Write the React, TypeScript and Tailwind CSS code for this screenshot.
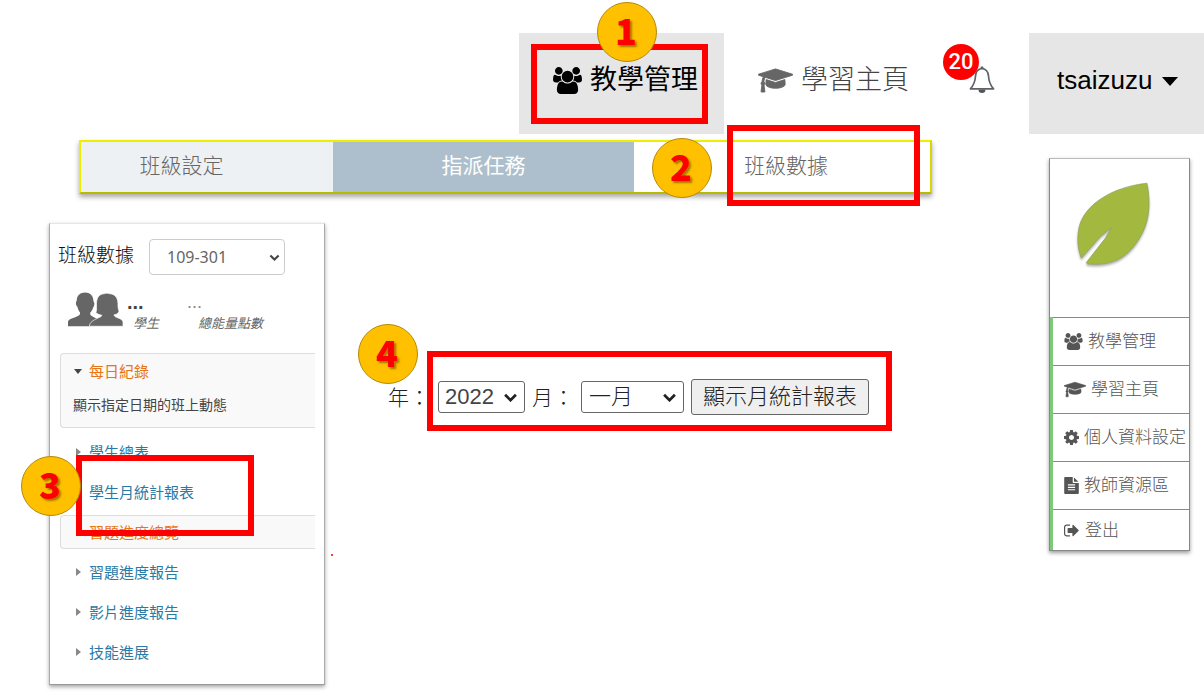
import type { ReactNode } from 'react';

type IconProps = { className?: string };

function UsersIcon({ className }: IconProps) {
  return (
    <svg viewBox="0 0 1920 1792" fill="currentColor" aria-hidden="true" className={className}>
      <path d="M593 896q-162 5-265 128h-134q-82 0-138-40.5t-56-118.5q0-353 124-353 6 0 43.5 21t97.5 42.5 119 21.5q67 0 133-23-5 37-5 66 0 139 81 256zm1071 637q0 120-73 189.5t-194 69.5h-874q-121 0-194-69.5t-73-189.5q0-53 3.5-103.5t14-109 26.5-108.5 43-97.5 62-81 85.5-53.5 111.5-20q10 0 43 21.5t73 48 107 48 135 21.5 135-21.5 107-48 73-48 43-21.5q61 0 111.5 20t85.5 53.5 62 81 43 97.5 26.5 108.5 14 109 3.5 103.5zm-1024-1277q0 106-75 181t-181 75-181-75-75-181 75-181 181-75 181 75 75 181zm704 384q0 159-112.5 271.5t-271.5 112.5-271.5-112.5-112.5-271.5 112.5-271.5 271.5-112.5 271.5 112.5 112.5 271.5zm576 225q0 78-56 118.5t-138 40.5h-134q-103-123-265-128 81-117 81-256 0-29-5-66 66 23 133 23 59 0 119-21.5t97.5-42.5 43.5-21q124 0 124 353zm-128-609q0 106-75 181t-181 75-181-75-75-181 75-181 181-75 181 75 75 181z" />
    </svg>
  );
}

function CapIcon({ className }: IconProps) {
  return (
    <svg viewBox="0 0 2304 1792" fill="currentColor" stroke="currentColor" strokeWidth="60" aria-hidden="true" className={className}>
      <path d="M1774 836l18 316q4 69-82 128t-235 93.5-323 34.5-323-34.5-235-93.5-82-128l18-316 574 181q22 7 48 7t48-7zm530-324q0 23-22 31l-1120 352q-4 1-10 1t-10-1l-652-206q-43 34-71 111.5t-34 178.5q63 36 63 109 0 69-58 107l58 433q2 14-8 25-9 11-24 11h-192q-15 0-24-11-10-11-8-25l58-433q-58-38-58-107 0-73 65-111 11-207 98-330l-333-104q-22-8-22-31t22-31l1120-352q4-1 10-1t10 1l1120 352q22 8 22 31z" />
    </svg>
  );
}

function CogIcon({ className }: IconProps) {
  return (
    <svg viewBox="128 128 1536 1536" fill="currentColor" aria-hidden="true" className={className}>
      <path d="M1152 896q0-106-75-181t-181-75-181 75-75 181 75 181 181 75 181-75 75-181zm512-109v222q0 12-8 23t-20 13l-185 28q-19 54-39 91 35 50 107 138 10 12 10 25t-9 23q-27 37-99 108t-94 71q-12 0-26-9l-138-108q-44 23-91 38-16 136-29 186-7 28-36 28h-222q-14 0-24.5-8.5t-11.5-21.5l-28-184q-49-16-90-37l-141 107q-10 9-25 9-14 0-25-11-126-114-165-168-7-10-7-23 0-12 8-23 15-21 51-66.5t54-70.5q-27-50-41-99l-183-27q-13-2-21-12.5t-8-23.5v-222q0-12 8-23t19-13l186-28q14-46 39-92-40-57-107-138-10-12-10-24 0-10 9-23 26-36 98.5-107.5t94.5-71.5q13 0 26 10l138 107q44-23 91-38 16-136 29-186 7-28 36-28h222q14 0 24.5 8.5t11.5 21.5l28 184q49 16 90 37l142-107q9-9 24-9 13 0 25 10 129 119 165 170 7 8 7 22 0 12-8 23-15 21-51 66.5t-54 70.5q26 50 41 98l183 28q13 2 21 12.5t8 23.5z" />
    </svg>
  );
}

function FileIcon({ className }: IconProps) {
  return (
    <svg viewBox="128 0 1536 1792" fill="currentColor" aria-hidden="true" className={className}>
      <path d="M1596 476q14 14 28 36h-472v-472q22 14 36 28zm-476 164h544v1056q0 40-28 68t-68 28h-1344q-40 0-68-28t-28-68v-1600q0-40 28-68t68-28h800v544q0 40 28 68t68 28zm160 736v-64q0-14-9-23t-23-9h-704q-14 0-23 9t-9 23v64q0 14 9 23t23 9h704q14 0 23-9t9-23zm0-256v-64q0-14-9-23t-23-9h-704q-14 0-23 9t-9 23v64q0 14 9 23t23 9h704q14 0 23-9t9-23zm0-256v-64q0-14-9-23t-23-9h-704q-14 0-23 9t-9 23v64q0 14 9 23t23 9h704q14 0 23-9t9-23z" />
    </svg>
  );
}

function SignOutIcon({ className }: IconProps) {
  return (
    <svg viewBox="64 224 1600 1344" fill="currentColor" aria-hidden="true" className={className}>
      <path d="M704 1440q0 4 1 20t.5 26.5-3 23.5-10 19.5-20.5 6.5h-320q-119 0-203.5-84.5t-84.5-203.5v-704q0-119 84.5-203.5t203.5-84.5h320q13 0 22.5 9.5t9.5 22.5q0 4 1 20t.5 26.5-3 23.5-10 19.5-20.5 6.5h-320q-66 0-113 47t-47 113v704q0 66 47 113t113 47h312l11.5 1 11.5 3 8 5.5 7 9 2 13.5zm928-544q0 26-19 45l-544 544q-19 19-45 19t-45-19-19-45v-288h-448q-26 0-45-19t-19-45v-384q0-26 19-45t45-19h448v-288q0-26 19-45t45-19 45 19l544 544q19 19 19 45z" />
    </svg>
  );
}

function BellIcon({ className }: IconProps) {
  return (
    <svg viewBox="0 0 26 27" aria-hidden="true" className={className}>
      <path d="M9.5 23.5h7a3.5 3.5 0 0 1-7 0z" fill="#555" />
      <path
        d="M13 2.5C8.500 3 6.800 6 6.500 10C6.200 15 5 19 1.400 22.800H24.600C21 19 19.800 15 19.500 10C19.200 6 17.500 3 13 2.500Z"
        fill="#fff"
        stroke="#5f6368"
        strokeWidth="1.700"
        strokeLinejoin="round"
      />
      <circle cx="13" cy="1.800" r="1.500" fill="#5f6368" />
    </svg>
  );
}

function PeopleIcon({ className }: IconProps) {
  return (
    <svg viewBox="0 0 164 102" fill="#666" aria-hidden="true" className={className}>
      <path d="M51 0C65 0 76 9 76 27c4 2 3 14-1 18c-2 8-6 13-9 16c0 7 2 9 10 12c6 3 10 5 13 8c-12 5-20 10-23 20H0V87c2-8 14-9 26-15c8-3 10-5 10-12c-4-4-6-9-8-17c-5-4-6-14-2-18C26 9 36 0 51 0Z" />
      <path
        d="M108 4c6-3 13-1 16 0c20 1 26 17 25 36c0 9 3 14 3 18c-4 6-9 8-15 9c1 5 6 7 12 9c11 4 15 8 15 14v11H64C64 89 76 83 88 77c7-3 12-5 13-9c-7-1-13-3-18-8c3-6 2-10 2-21C84 18 91 5 108 4Z"
        stroke="#fff"
        strokeWidth="2"
      />
    </svg>
  );
}

function Leaf({ className }: IconProps) {
  return (
    <svg viewBox="138 92 226 258" aria-hidden="true" className={className}>
      <path
        d="M352 98C365 165 358 220 326 269C288 328 240 348 172 341L169 337L226 264L245 232L212 258L154 324C142 292 141 263 147 232C163 160 250 109 352 98Z"
        fill="#a2b83f"
        stroke="#8fa05a"
        strokeWidth="2"
      />
    </svg>
  );
}

function Chevron({ className }: IconProps) {
  return (
    <svg viewBox="0 0 16 10" fill="none" stroke="currentColor" strokeWidth="3" aria-hidden="true" className={className}>
      <path d="M2 2l6 6 6-6" />
    </svg>
  );
}

function Step({ n, className }: { n: number; className: string }) {
  return (
    <span
      className={`absolute z-20 flex size-[60px] items-center justify-center rounded-full border border-[#b58a06] bg-[#ffc000] pb-[6px] pr-[2px] font-['Noto_Sans_CJK_TC',sans-serif] text-[36px] font-black leading-none text-[#ff0000] [text-shadow:2px_2px_2px_rgba(90,60,0,0.55)] ${className}`}
    >
      {n}
    </span>
  );
}

function Highlight({ className }: { className: string }) {
  return <span className={`pointer-events-none absolute z-10 border-6 border-[#ff0000] ${className}`} />;
}

function SideItem({ children, className = '', arrow = true }: { children: ReactNode; className?: string; arrow?: boolean }) {
  return (
    <li>
      <a href="#" className={`flex h-10 items-center pl-4 text-[15px] font-normal text-[#2a7aa5] ${className}`}>
        <svg viewBox="0 0 5 8" aria-hidden="true" className="mr-2 h-2 w-[5px]">
          {arrow && <path d="M0 0l5 4-5 4z" fill="#888" />}
        </svg>
        {children}
      </a>
    </li>
  );
}

const menu = [
  { label: '教學管理', icon: <UsersIcon className="mr-[5px] h-[17px] w-[19px]" /> },
  { label: '學習主頁', icon: <CapIcon className="mr-[5px] h-[17px] w-[22px]" /> },
  { label: '個人資料設定', icon: <CogIcon className="mr-[5px] size-[15px]" /> },
  { label: '教師資源區', icon: <FileIcon className="mr-[5px] h-[17px] w-[15px]" /> },
  { label: '登出', icon: <SignOutIcon className="mr-[6px] h-[13px] w-[15px]" /> },
];

export default function App() {
  return (
    <div className="min-h-screen overflow-hidden bg-white pt-[33px] font-['Liberation_Sans','Noto_Sans_CJK_TC',sans-serif] font-light leading-none text-[#555]">
      <header className="flex h-[101px] justify-end">
        <div className="relative w-[205px] bg-[#e6e6e6]">
          <a href="#" className="flex h-[95px] items-center pl-[34px] text-[27px] font-normal text-black">
            <UsersIcon className="mr-2 h-[27px] w-[29px]" />
            教學管理
          </a>
          <Highlight className="left-3 top-[11px] h-20 w-[177px]" />
          <Step n={1} className="-top-[31px] left-[78px]" />
        </div>
        <a href="#" className="ml-[34px] flex h-[95px] items-center text-[27px] text-[#444]">
          <CapIcon className="mr-2 h-[27px] w-[35px] text-[#666]" />
          學習主頁
        </a>
        <button type="button" aria-label="20" className="relative ml-[34px] flex h-[93px] w-[86px] items-center pl-[26px]">
          <BellIcon className="h-[27px] w-[26px]" />
          <span className="absolute left-0 top-[11px] flex size-9 items-center justify-center rounded-full bg-[#ff0000] font-['Roboto',sans-serif] text-[22px] font-medium text-white">
            20
          </span>
        </button>
        <button type="button" className="flex w-[175px] items-center bg-[#e6e6e6] pb-2 pl-7 text-[26px] font-normal text-black">
          tsaizuzu
          <svg viewBox="0 0 16 9" aria-hidden="true" className="ml-[10px] mt-1 h-[9px] w-4">
            <path d="M0 0h16L8 9z" />
          </svg>
        </button>
      </header>

      <div className="flex items-start">
        <main className="min-w-0 flex-1">
          <nav className="ml-[79px] mr-[117px] mt-[6px] flex h-[54px] border-2 border-[#eeee00] border-b-[#b9b900] border-r-[#d6d600] text-[21px] text-[#666] shadow-[0_3px_5px_rgba(0,0,0,0.35)]">
            <a href="#" className="flex w-[252px] shrink items-center justify-center bg-[#edf1f4] pb-1 pr-[51px]">班級設定</a>
            <a href="#" className="flex w-[301px] shrink items-center justify-center bg-[#adbfcc] pb-1 font-normal text-white">指派任務</a>
            <div className="relative flex flex-1">
              <a href="#" className="flex flex-1 items-center justify-center pb-1 pl-2">班級數據</a>
              <Highlight className="-top-[17px] left-[93px] h-[81px] w-[193px]" />
              <Step n={2} className="-top-1 left-[18px]" />
            </div>
          </nav>

          <div className="mt-[29px] flex items-start pb-3">
            <aside className="relative ml-[49px] h-[462px] w-[276px] border border-x-[#aaa] border-b-[#999] border-t-[#e5e5e5] pt-[15px] shadow-[0_2px_4px_rgba(0,0,0,0.35)]">
              <div className="flex h-9 items-center pl-2">
                <label htmlFor="class" className="w-[91px] pb-1 text-[19px] text-[#111]">班級數據</label>
                <div className="relative">
                  <select
                    id="class"
                    className="h-9 w-[136px] appearance-none rounded border border-[#ccc] bg-white pl-[17px] font-['Noto_Sans',sans-serif] text-base font-normal text-[#666]"
                  >
                    <option>109-301</option>
                  </select>
                  <Chevron className="pointer-events-none absolute right-[5px] top-[15px] h-[7px] w-[11px] text-[#444]" />
                </div>
              </div>
              <div className="mt-[17px] flex h-10 pl-[18px]">
                <PeopleIcon className="h-[35px] w-[55px]" />
                <div className="ml-1 w-[60px]">
                  <div className="h-[25px] text-[20px] font-bold leading-5 text-[#444]">...</div>
                  <div className="pl-[6px] text-[13px] font-normal italic text-[#666]">學生</div>
                </div>
                <div>
                  <div className="h-[25px] text-[18px] leading-5 text-[#888]">...</div>
                  <div className="pl-[11px] text-[13px] font-normal italic text-[#666]">總能量點數</div>
                </div>
              </div>
              <div className="ml-[10px] mr-[9px] mt-[21px] h-[75px] rounded-l border border-r-0 border-[#ddd] bg-[#f9f9f9] pl-3">
                <a href="#" className="flex h-[35px] items-center text-[15px] font-normal text-[#e57515]">
                  <svg viewBox="0 0 8 5" aria-hidden="true" className="ml-[1px] mr-[7px] h-[5px] w-2">
                    <path d="M0 0h8L4 5z" fill="#444" />
                  </svg>
                  每日紀錄
                </a>
                <p className="pt-[9px] text-[14px] font-normal text-[#444]">顯示指定日期的班上動態</p>
              </div>
              <ul className="ml-[10px] mr-[9px] mt-1">
                <SideItem>學生總表</SideItem>
                <SideItem arrow={false}>學生月統計報表</SideItem>
                <SideItem className="my-[3px] h-[34px] rounded-l border border-r-0 border-[#ddd] bg-[#f9f9f9] pl-[15px] text-[#e57515]">
                  習題進度總覽
                </SideItem>
                <SideItem>習題進度報告</SideItem>
                <SideItem>影片進度報告</SideItem>
                <SideItem>技能進展</SideItem>
              </ul>
              <Highlight className="left-[26px] top-[231px] h-[81px] w-[178px]" />
              <Step n={3} className="-left-[29px] top-[232px]" />
              <span className="absolute -right-[9px] top-[330px] size-[2px] rounded-full bg-[#ff0000]" />
            </aside>

            <form className="relative ml-[63px] mt-[156px] flex h-9 items-center text-[21px] text-[#222]">
              <label htmlFor="year" className="w-[50px] whitespace-nowrap">年：</label>
              <div className="relative">
                <select id="year" className="h-8 w-[87px] appearance-none rounded-[3px] border border-[#666] bg-white pl-[6px] text-[22px] font-normal leading-none text-[#444]">
                  <option>2022</option>
                </select>
                <Chevron className="pointer-events-none absolute right-[7px] top-3 h-[9px] w-[15px]" />
              </div>
              <label htmlFor="month" className="ml-[7px] w-[49px] whitespace-nowrap">月：</label>
              <div className="relative">
                <select id="month" className="h-8 w-[103px] appearance-none rounded-[3px] border border-[#666] bg-white pl-[7px] text-[22px] leading-none">
                  <option>一月</option>
                </select>
                <Chevron className="pointer-events-none absolute right-[7px] top-3 h-[9px] w-[15px]" />
              </div>
              <button type="button" className="ml-[7px] h-9 w-[178px] whitespace-nowrap rounded-[3px] border border-[#666] bg-[#efefef] text-[22px]">
                顯示月統計報表
              </button>
              <Highlight className="-top-7 left-[39px] h-20 w-[465px]" />
              <Step n={4} className="-left-[30px] -top-[55px]" />
            </form>
          </div>
        </main>

        <aside className="mr-[14px] mt-6 w-[141px] border border-[#888] border-t-[#bbb] shadow-[0_2px_4px_rgba(0,0,0,0.4)]">
          <div className="flex h-[158px] justify-center pt-[22px]">
            <Leaf className="mr-3 h-[86px] w-[75px] drop-shadow-[0_2px_1px_rgba(0,0,0,0.3)]" />
          </div>
          <nav className="border-l-3 border-[#7cc977]">
            {menu.map((item) => (
              <a
                key={item.label}
                href="#"
                className="flex h-12 items-center whitespace-nowrap border-t border-[#888] pl-[11px] text-[17px] text-[#555] last:h-[41px]"
              >
                {item.icon}
                {item.label}
              </a>
            ))}
          </nav>
        </aside>
      </div>
    </div>
  );
}
